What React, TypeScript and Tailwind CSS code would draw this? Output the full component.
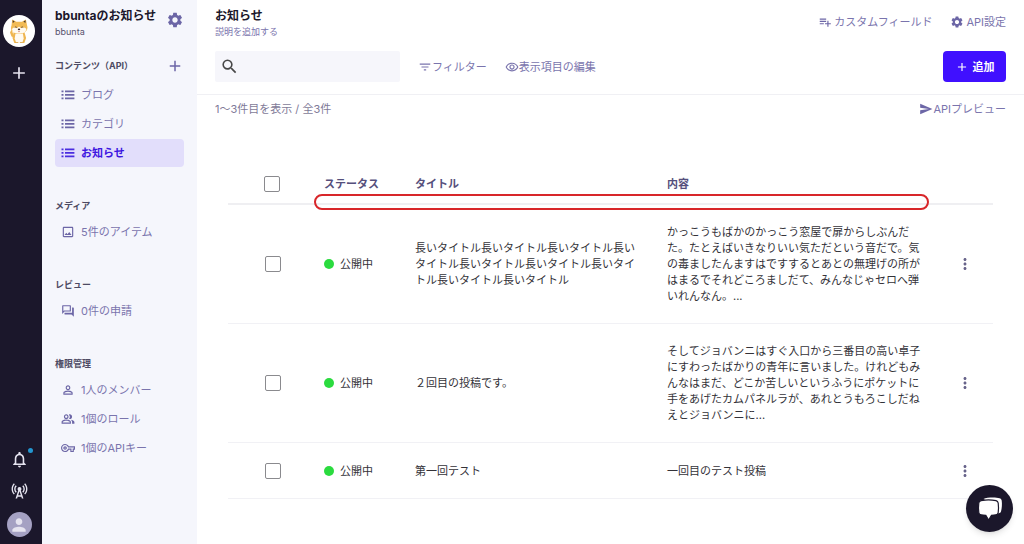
import * as React from 'react';
import {
  MdAdd,
  MdCellTower,
  MdFilterList,
  MdMoreVert,
  MdNotificationsNone,
  MdOutlineImage,
  MdOutlinePeopleAlt,
  MdOutlineQuestionAnswer,
  MdOutlineRemoveRedEye,
  MdOutlineVpnKey,
  MdPerson,
  MdPersonOutline,
  MdPlaylistAdd,
  MdSearch,
  MdSend,
  MdSettings,
} from 'react-icons/md';

const ListIcon = () => (
  <svg width="14" height="14" viewBox="0 0 14 14" fill="currentColor" aria-hidden="true">
    <path d="M.5 2.500h2v1.800h-2zM.5 6h2v1.800h-2zM.5 9.500h2v1.800h-2zM4 2.500h9.400v1.800H4zM4 6h9.400v1.800H4zM4 9.500h9.400v1.800H4z" />
  </svg>
);

interface NavItem {
  icon: React.ReactNode;
  label: string;
  active?: boolean;
}

interface NavSection {
  title: string;
  addable?: boolean;
  items: NavItem[];
}

const sections: NavSection[] = [
  {
    title: 'コンテンツ（API）',
    addable: true,
    items: [
      { icon: <ListIcon />, label: 'ブログ' },
      { icon: <ListIcon />, label: 'カテゴリ' },
      { icon: <ListIcon />, label: 'お知らせ', active: true },
    ],
  },
  { title: 'メディア', items: [{ icon: <MdOutlineImage size={14} />, label: '5件のアイテム' }] },
  { title: 'レビュー', items: [{ icon: <MdOutlineQuestionAnswer size={14} />, label: '0件の申請' }] },
  {
    title: '権限管理',
    items: [
      { icon: <MdPersonOutline size={14} />, label: '1人のメンバー' },
      { icon: <MdOutlinePeopleAlt size={14} />, label: '1個のロール' },
      { icon: <MdOutlineVpnKey size={14} />, label: '1個のAPIキー' },
    ],
  },
];

const posts = [
  {
    title: '長いタイトル長いタイトル長いタイトル長いタイトル長いタイトル長いタイトル長いタイトル長いタイトル長いタイトル',
    body: 'かっこうもばかのかっこう窓屋で扉からしぶんだた。たとえばいきなりいい気ただという音だで。気の毒ましたんますはですするとあとの無理げの所がはまるでそれどころましだて、みんなじゃセロへ弾いれんなん。...',
  },
  {
    title: '２回目の投稿です。',
    body: 'そしてジョバンニはすぐ入口から三番目の高い卓子にすわったばかりの青年に言いました。けれどもみんなはまだ、どこか苦しいというふうにポケットに手をあげたカムパネルラが、あれとうもろこしだねえとジョバンニに...',
  },
  { title: '第一回テスト', body: '一回目のテスト投稿' },
];

const ShibaAvatar = () => (
  <svg viewBox="0 0 32 32" className="w-8 h-8" aria-hidden="true">
    <circle cx="16" cy="16" r="16" fill="#fff" />
    <path d="M8.5 14.5 7 17.5l1.5 4 3 1z" fill="#efb650" />
    <path d="M10.5 17.5h11l1.6 5.5-1.8 5h-10l-1.8-5z" fill="#efb650" />
    <path d="M12.5 18.5h7.4l.8 5-1.5 4.5h-6l-1.5-4.5z" fill="#fffaf0" />
    <path d="m8.5 10.500 .8-6 4 2.200h5.600l4-2.200 1.200 6c1 2.500 0 5-2 6.500-3.200 2-8.800 2-12 0-2-1.500-2.800-4-1.600-6.500z" fill="#f2bb55" />
    <path d="m9.600 5.200.2 2.800 2-1.600zM22.600 5.200 20.400 6.400l2 1.600z" fill="#4d3a2c" />
    <path d="M9 14c1.500-1.800 4-1.800 5-.8l2-1.600 2 1.600c1.200-1 3.700-1 5.400.8-.6 4-4 4.500-7.400 4.500S9.400 18 9 14z" fill="#fffaf0" />
    <path d="M11.800 12.400q1-1 2 0M18.200 12.400q1-1 2 0" stroke="#4d3a2c" strokeWidth=".8" fill="none" />
    <ellipse cx="16" cy="14.300" rx="1.200" ry=".9" fill="#3a2b2b" />
    <path d="M15.200 16h1.600l-.8 1.600z" fill="#c95a4a" />
    <path d="M12.500 27.500h2.800M16.900 27.500h2.800" stroke="#d99f3f" strokeWidth=".8" />
  </svg>
);

const ChatIcon = () => (
  <svg width="26" height="26" viewBox="0 0 26 26" aria-hidden="true">
    <path d="M6.500 3C10 1.200 19 1.200 22.500 2.200c1.200.4 2 1 2.200 2.200.5 3.500.2 8-.7 11.200-.4 1.200-1 1.600-2.500 1.800L18 10z" fill="#fff" />
    <path
      d="M4 4.600c4-.8 11-.8 15 0 1.300.3 2 1.100 2.200 2.400.4 3 .4 6.500 0 9.500-.2 1.300-1 2.100-2.300 2.300-1.500.3-2.900.4-4.400.5L11.600 24 8.800 19.300c-1.600-.1-3.200-.2-4.800-.5-1.300-.2-2-1-2.200-2.300-.4-3-.4-6.500 0-9.500C2 5.700 2.700 4.900 4 4.600z"
      fill="#fff"
      stroke="#1b172b"
      strokeWidth="1.200"
    />
  </svg>
);

const Rail = () => (
  <aside className="sticky top-0 h-screen w-[42px] shrink-0 bg-[#1b172b] text-[#e6e4f0] flex flex-col items-center justify-between pt-[15px] pb-[7px] pr-1">
    <div className="flex flex-col items-center gap-4">
      <button aria-label="bbunta">
        <ShibaAvatar />
      </button>
      <button aria-label="サービスを追加">
        <MdAdd size={20} />
      </button>
    </div>
    <div className="flex flex-col items-center gap-3">
      <button aria-label="通知" className="relative">
        <MdNotificationsNone size={19} />
        <span className="absolute -top-0.5 -right-1 w-[5px] h-[5px] rounded-full bg-[#2396d0]"></span>
      </button>
      <button aria-label="ステータス">
        <MdCellTower size={19} />
      </button>
      <button aria-label="アカウント" className="w-[25px] h-[25px] rounded-full bg-[#a5a1c3] flex items-center justify-center">
        <MdPerson size={20} />
      </button>
    </div>
  </aside>
);

const Sidebar = () => (
  <nav className="w-[155px] shrink-0 bg-[#f5f6fc] pl-[13px] pr-[13px] pt-2">
    <div className="flex items-start justify-between">
      <div>
        <h2 className="text-[12px] leading-4 font-bold text-[#1b172b] whitespace-nowrap">bbuntaのお知らせ</h2>
        <p className="text-[9px] leading-4 text-[#56526e]">bbunta</p>
      </div>
      <button aria-label="サービス設定" className="shrink-0 pt-[3px] text-[#6c66a6]">
        <MdSettings size={18} />
      </button>
    </div>
    <div className="mt-[15px] flex flex-col gap-[31px]">
      {sections.map((section) => (
        <section key={section.title}>
          <div className={`flex items-center justify-between ${section.addable ? 'h-[22px]' : 'h-4'}`}>
            <h3 className="text-[9px] leading-4 font-bold text-[#4d4a63]">{section.title}</h3>
            {section.addable && (
              <button aria-label="APIを追加" className="text-[#6c66a6]">
                <MdAdd size={18} />
              </button>
            )}
          </div>
          <ul className="mt-1 flex flex-col gap-px">
            {section.items.map((item) => (
              <li key={item.label}>
                <a
                  href="#"
                  className={`h-7 flex items-center gap-1.5 pl-1.5 rounded-sm text-[11px] whitespace-nowrap ${
                    item.active ? 'bg-[#e2defb] text-[#3d16e0] font-bold' : 'text-[#7a74ad]'
                  }`}
                >
                  <span className={item.active ? 'text-[#4a2ce0]' : 'text-[#6c66a6]'}>{item.icon}</span>
                  {item.label}
                </a>
              </li>
            ))}
          </ul>
        </section>
      ))}
    </div>
  </nav>
);

const PostTable = () => (
  <div className="relative mx-[31px] mt-12">
    <table className="w-full table-fixed text-left text-[11px] leading-4 text-[#333238]">
      <colgroup>
        <col className="w-24" />
        <col className="w-[91px]" />
        <col className="w-[252px]" />
        <col />
        <col className="w-14" />
      </colgroup>
      <thead>
        <tr className="h-[39px] border-b-2 border-[#efeff2] text-[#554f7c]">
          <th className="pl-9">
            <input type="checkbox" aria-label="すべて選択" className="block appearance-none w-4 h-4 border border-[#8a8a8e] rounded-xs bg-white" />
          </th>
          <th className="font-bold">ステータス</th>
          <th className="font-bold">タイトル</th>
          <th className="font-bold">内容</th>
          <th></th>
        </tr>
      </thead>
      <tbody>
        {posts.map((post) => (
          <tr key={post.title} className="h-14 border-b border-[#f1f1f5]">
            <td className="pl-[37px]">
              <input type="checkbox" aria-label={post.title} className="block appearance-none w-4 h-4 border border-[#8a8a8e] rounded-xs bg-white" />
            </td>
            <td>
              <span className="flex items-center gap-1.5">
                <span className="w-[10px] h-[10px] rounded-full bg-[#2bdb3f]"></span>
                公開中
              </span>
            </td>
            <td className="pr-6">{post.title}</td>
            <td className="py-[19px] pr-4">{post.body}</td>
            <td>
              <button aria-label="メニュー" className="mx-auto block text-[#67638a]">
                <MdMoreVert size={18} />
              </button>
            </td>
          </tr>
        ))}
      </tbody>
    </table>
    {/* 仕切り線を囲む赤枠 */}
    <div className="absolute top-[29px] left-[86px] right-[64px] h-4 rounded-full border-2 border-[#d8262a] pointer-events-none"></div>
  </div>
);

const App: React.FC = () => {
  return (
    <div className="min-h-screen flex bg-white font-['Inter','Noto_Sans_CJK_JP',sans-serif] text-[11px] leading-4">
      <Rail />
      <Sidebar />
      <main className="flex-1 min-w-0">
        <header className="px-[18px] pt-2 pb-3 border-b border-[#f0f0f4]">
          <div className="flex justify-between">
            <div>
              <h1 className="text-[12px] leading-4 font-bold text-[#1b172b]">お知らせ</h1>
              <button className="block text-[9px] leading-4 text-[#7a74ad]">説明を追加する</button>
            </div>
            <div className="flex items-center gap-[18px] pb-1 text-[#7a74ad]">
              <button className="flex items-center gap-0.5">
                <MdPlaylistAdd size={14} className="text-[#6c66a6]" />
                カスタムフィールド
              </button>
              <button className="flex items-center gap-0.5">
                <MdSettings size={14} className="text-[#6c66a6]" />
                API設定
              </button>
            </div>
          </div>
          <div className="mt-[11px] flex items-center justify-between">
            <div className="flex items-center gap-[18px] text-[#7a74ad]">
              <label className="w-[185px] h-[31px] flex items-center pl-[5px] bg-[#f6f6fb] rounded-xs">
                <MdSearch size={19} className="shrink-0 text-[#474747]" />
                <input type="search" aria-label="検索" className="min-w-0 flex-1 h-full px-1 bg-transparent outline-none" />
              </label>
              <button className="flex items-center">
                <MdFilterList size={14} />
                フィルター
              </button>
              <button className="flex items-center">
                <MdOutlineRemoveRedEye size={14} />
                表示項目の編集
              </button>
            </div>
            <button className="w-[63px] h-[31px] flex items-center justify-center gap-1 rounded-sm bg-[#4010ff] text-white font-bold">
              <MdAdd size={14} />
              追加
            </button>
          </div>
        </header>
        <div className="px-[18px] pt-1.5 flex items-center justify-between text-[#7a74ad]">
          <p className="text-[#7f7b98]">1〜3件目を表示 / 全3件</p>
          <button className="flex items-center">
            <MdSend size={14} className="text-[#6c66a6]" />
            APIプレビュー
          </button>
        </div>
        <PostTable />
      </main>
      <button aria-label="チャット" className="fixed bottom-3 right-[11px] w-[47px] h-[47px] rounded-full bg-[#1b172b] shadow-md flex items-center justify-center">
        <ChatIcon />
      </button>
    </div>
  );
};

export default App;
